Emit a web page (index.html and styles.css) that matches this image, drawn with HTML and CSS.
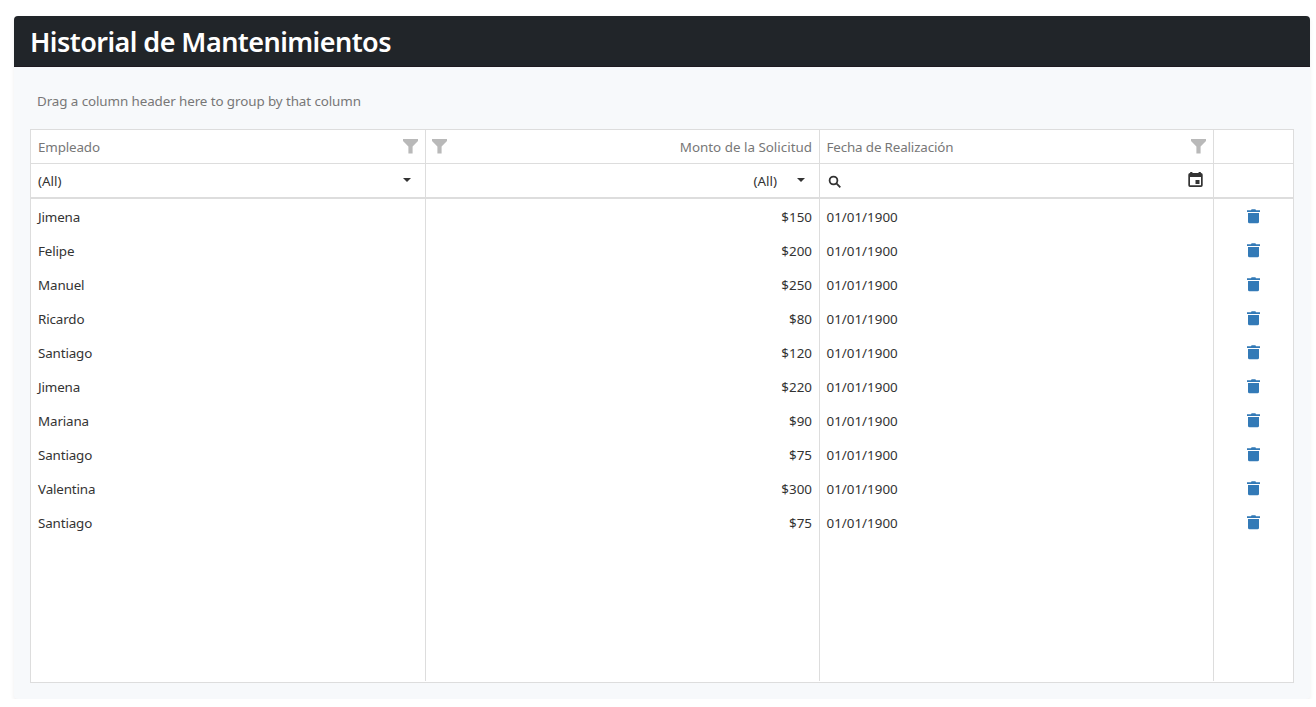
FILE: index.html
```
<!DOCTYPE html>
<html lang="es">
<head>
<meta charset="utf-8">
<title>Historial de Mantenimientos</title>
<link rel="stylesheet" href="styles.css">
</head>
<body>
<svg class="sprite" aria-hidden="true">
  <symbol id="funnel" viewBox="0 0 15 15"><path d="M0 0H15V2L9.6 7.5V14.5H5.4V7.5L0 2Z"/></symbol>
  <symbol id="caret" viewBox="0 0 8 4"><path d="M0 0H8L4 4Z"/></symbol>
  <symbol id="trash" viewBox="0 0 13 15"><path d="M0 1.2H4L4.6 .3H8.4L9 1.2H13V3H0ZM1 4H12V12.7Q12 14.2 10.5 14.2H2.5Q1 14.2 1 12.7Z"/></symbol>
</svg>
<main class="card">
  <header class="card-header"><h1 class="title">Historial de Mantenimientos</h1></header>
  <section class="card-body">
    <div class="group-panel">Drag a column header here to group by that column</div>
    <div class="grid">
      <div class="row head">
        <div class="cell"><span class="label">Empleado</span><svg class="funnel"><use href="#funnel"/></svg></div>
        <div class="cell amount-head"><svg class="funnel"><use href="#funnel"/></svg><span>Monto de la Solicitud</span></div>
        <div class="cell date"><span class="label">Fecha de Realización</span><svg class="funnel"><use href="#funnel"/></svg></div>
        <div class="cell"></div>
      </div>
      <div class="row filters">
        <div class="cell"><span>(All)</span><svg class="caret"><use href="#caret"/></svg></div>
        <div class="cell amount-filter"><span>(All)</span><svg class="caret"><use href="#caret"/></svg></div>
        <div class="cell date">
          <svg class="search" viewBox="0 0 14 14"><circle cx="5.5" cy="5.5" r="3.9"/><path d="M8.4 8.4L12.3 12.3"/></svg>
          <svg class="calendar" viewBox="0 0 15 16"><path fill-rule="evenodd" d="M2.2 0H4.4V1H10.6V0H12.8V1H13Q14.7 1 14.7 2.7V13.3Q14.7 15 13 15H2Q.3 15 .3 13.3V2.7Q.3 1 2 1H2.2ZM2 5V13.3H13V5Z"/><path d="M7.5 8H11.5V12H7.5Z"/></svg>
        </div>
        <div class="cell"></div>
      </div>
      <div class="rows">
        <div class="row"><div class="cell name">Jimena</div><div class="cell amount">$150</div><div class="cell date">01/01/1900</div><div class="cell action"><svg class="trash"><use href="#trash"/></svg></div></div>
        <div class="row"><div class="cell name">Felipe</div><div class="cell amount">$200</div><div class="cell date">01/01/1900</div><div class="cell action"><svg class="trash"><use href="#trash"/></svg></div></div>
        <div class="row"><div class="cell name">Manuel</div><div class="cell amount">$250</div><div class="cell date">01/01/1900</div><div class="cell action"><svg class="trash"><use href="#trash"/></svg></div></div>
        <div class="row"><div class="cell name">Ricardo</div><div class="cell amount">$80</div><div class="cell date">01/01/1900</div><div class="cell action"><svg class="trash"><use href="#trash"/></svg></div></div>
        <div class="row"><div class="cell name">Santiago</div><div class="cell amount">$120</div><div class="cell date">01/01/1900</div><div class="cell action"><svg class="trash"><use href="#trash"/></svg></div></div>
        <div class="row"><div class="cell name">Jimena</div><div class="cell amount">$220</div><div class="cell date">01/01/1900</div><div class="cell action"><svg class="trash"><use href="#trash"/></svg></div></div>
        <div class="row"><div class="cell name">Mariana</div><div class="cell amount">$90</div><div class="cell date">01/01/1900</div><div class="cell action"><svg class="trash"><use href="#trash"/></svg></div></div>
        <div class="row"><div class="cell name">Santiago</div><div class="cell amount">$75</div><div class="cell date">01/01/1900</div><div class="cell action"><svg class="trash"><use href="#trash"/></svg></div></div>
        <div class="row"><div class="cell name">Valentina</div><div class="cell amount">$300</div><div class="cell date">01/01/1900</div><div class="cell action"><svg class="trash"><use href="#trash"/></svg></div></div>
        <div class="row"><div class="cell name">Santiago</div><div class="cell amount">$75</div><div class="cell date">01/01/1900</div><div class="cell action"><svg class="trash"><use href="#trash"/></svg></div></div>
        <div class="row free"><div class="cell"></div><div class="cell"></div><div class="cell"></div><div class="cell"></div></div>
      </div>
    </div>
  </section>
</main>
</body>
</html>
```
FILE: styles.css
```
* { box-sizing: border-box; }
body {
  margin: 0;
  padding: 16px 6px 0 14px;
  background: #fff;
  color: #333;
  font: 13.4px/20px "Segoe UI", "Noto Sans", sans-serif;
}
.sprite { display: none; }
.card {
  height: 683px;
  display: flex;
  flex-direction: column;
  border-radius: 4px;
  background: #f7f9fb;
  box-shadow: 0 2px 4px rgba(0, 0, 0, .075);
}
.card-header {
  height: 51px;
  padding: 9px 16px 0;
  background: #212529;
  border-bottom: 1px solid #1e1a20;
  border-radius: 4px 4px 0 0;
}
.title {
  margin: 0;
  color: #fff;
  font-size: 27px;
  line-height: 34px;
  font-weight: 600;
  letter-spacing: -.55px;
  white-space: nowrap;
}
.card-body {
  flex: 1;
  display: flex;
  flex-direction: column;
  padding: 16px;
}
.group-panel {
  height: 46px;
  padding: 8px 7px;
  color: #777;
  letter-spacing: -.09px;
  white-space: nowrap;
}
.grid {
  flex: 1;
  display: flex;
  flex-direction: column;
  width: 1264px;
  padding-bottom: 1px;
  background: #fff;
  border: 1px solid #ddd;
}
.row { display: grid; grid-template-columns: 395px 394px 394px 79px; height: 34px; }
.cell {
  display: flex;
  align-items: center;
  justify-content: space-between;
  padding: 0 7px;
  border-right: 1px solid #ddd;
  white-space: nowrap;
}
.cell:last-child { border-right: 0; }
.head { color: #777; border-bottom: 1px solid #ddd; }
.label { letter-spacing: -.15px; }
.filters { height: 35px; border-bottom: 2px solid #ddd; }
.rows { flex: 1; display: flex; flex-direction: column; }
.rows .row:first-child { height: 35px; }
.rows .row:first-child .cell { padding-top: 1px; }
.rows .free { flex: 1; }
.name { letter-spacing: -.14px; }
.amount { justify-content: flex-end; }
.amount-head { padding-left: 6px; }
.date { padding-left: 6.5px; }
.action { justify-content: center; }
.funnel { width: 15px; height: 15px; fill: #b9b9b9; }
.caret { width: 8px; height: 4px; margin: 0 7px 2px 0; fill: #333; }
.amount-filter { justify-content: flex-end; gap: 20px; }
.search { width: 14px; height: 14px; margin: 2px 0 0 1px; fill: none; stroke: #333; stroke-width: 1.8; }
.calendar { width: 15px; height: 16px; margin: 0 3px 1px 0; fill: #333; }
.trash { width: 13px; height: 15px; margin-bottom: 2px; fill: #337ab7; }
```
